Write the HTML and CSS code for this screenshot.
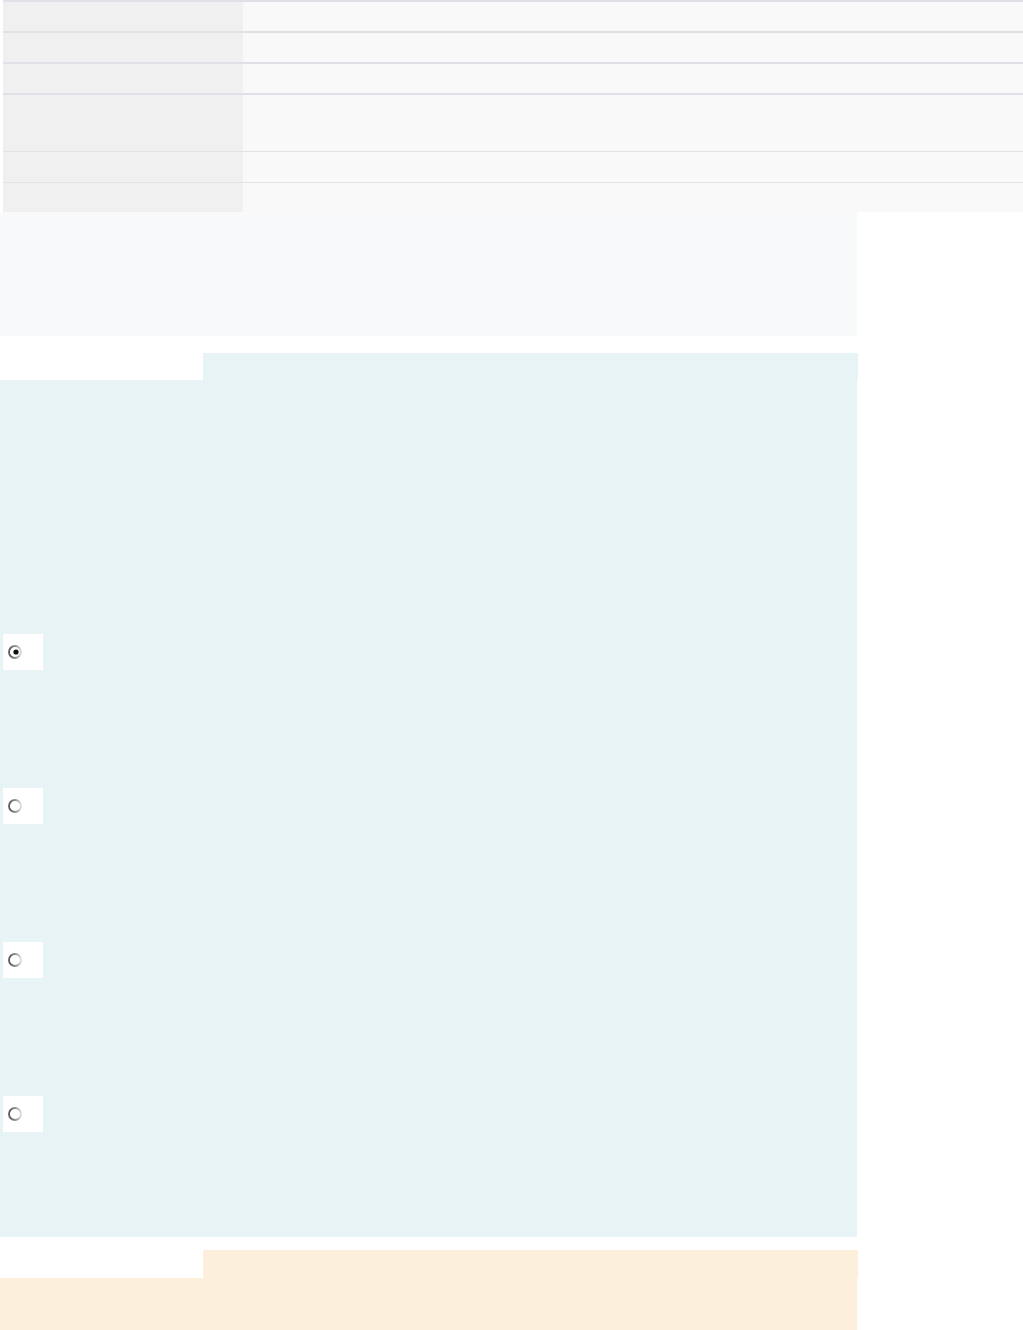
FILE: index.html
```html
<!DOCTYPE html>
<html>
<head>
  <meta charset="UTF-8">
  <meta name="viewport" content="width=device-width, initial-scale=1.0">
  <title>Revisión del intento</title>
  <link rel="stylesheet" href="styles.css">
</head>
<body>
  <div class="resumen">
    <div class="fila"><div class="celda-th"></div><div class="celda-td"></div></div>
    <div class="fila"><div class="celda-th"></div><div class="celda-td"></div></div>
    <div class="fila"><div class="celda-th"></div><div class="celda-td"></div></div>
    <div class="fila alta"><div class="celda-th"></div><div class="celda-td"></div></div>
    <div class="fila clara"><div class="celda-th"></div><div class="celda-td"></div></div>
    <div class="fila clara ultima"><div class="celda-th"></div><div class="celda-td"></div></div>
  </div>

  <div class="info-intento"></div>

  <div class="pregunta">
    <div class="pestana"><div class="hueco"></div><div class="lengueta formulacion"></div></div>
    <div class="formulacion cuerpo">
      <div class="opcion">
        <svg width="22" height="22" viewBox="0 0 22 22">
          <defs>
            <linearGradient id="aro" x1="0" y1="0" x2="1" y2="0">
              <stop offset="0" stop-color="#555"/>
              <stop offset="0.6" stop-color="#999"/>
              <stop offset="1" stop-color="#ddd"/>
            </linearGradient>
          </defs>
          <circle cx="12" cy="11" r="6" fill="#fff" stroke="url(#aro)" stroke-width="1.8"/>
          <circle cx="13" cy="11" r="2.6" fill="#111"/>
        </svg>
      </div>
      <div class="opcion">
        <svg width="22" height="22" viewBox="0 0 22 22">
          <circle cx="12" cy="11" r="6" fill="#fff" stroke="url(#aro)" stroke-width="1.8"/>
        </svg>
      </div>
      <div class="opcion">
        <svg width="22" height="22" viewBox="0 0 22 22">
          <circle cx="12" cy="11" r="6" fill="#fff" stroke="url(#aro)" stroke-width="1.8"/>
        </svg>
      </div>
      <div class="opcion">
        <svg width="22" height="22" viewBox="0 0 22 22">
          <circle cx="12" cy="11" r="6" fill="#fff" stroke="url(#aro)" stroke-width="1.8"/>
        </svg>
      </div>
    </div>
  </div>

  <div class="resultado">
    <div class="pestana"><div class="hueco"></div><div class="lengueta naranja"></div></div>
    <div class="naranja cuerpo-resultado"></div>
  </div>
</body>
</html>
```

FILE: styles.css
```css
body {
  margin: 0;
  font-family: "Liberation Sans", Arial, sans-serif;
  background-color: white;
}

.resumen {
  margin-left: 3px;
  width: 1020px;
  border-top: 2px solid #dee2e6;
}

.fila {
  display: flex;
  height: 29px;
  border-bottom: 2px solid #dee2e6;
}

.fila.alta {
  height: 56px;
  border-bottom: 1px solid #e2e2e2;
}

.fila.clara {
  height: 30px;
  border-bottom: 1px solid #e2e2e2;
}

.fila.ultima {
  height: 29px;
  border-bottom: none;
}

.celda-th {
  width: 240px;
  background-color: #f0f0f0;
}

.celda-td {
  flex: 1;
  background-color: #f9f9f9;
}

.info-intento {
  width: 857px;
  height: 124px;
  background-color: #f8f9fa;
}

.pregunta {
  margin-top: 17px;
  width: 858px;
}

.pestana {
  display: flex;
  height: 27px;
}

.hueco {
  width: 203px;
}

.lengueta {
  width: 655px;
}

.formulacion {
  background-color: #e7f3f5;
}

.cuerpo {
  width: 857px;
  height: 857px;
  padding-top: 254px;
  box-sizing: border-box;
}

.opcion {
  margin-left: 3px;
  width: 40px;
  height: 36px;
  margin-bottom: 118px;
  background-color: white;
  display: flex;
  align-items: center;
}

.resultado {
  margin-top: 13px;
  width: 858px;
}

.resultado .pestana {
  height: 28px;
}

.naranja {
  background-color: #fcefdc;
}

.cuerpo-resultado {
  width: 857px;
  height: 60px;
}
```
